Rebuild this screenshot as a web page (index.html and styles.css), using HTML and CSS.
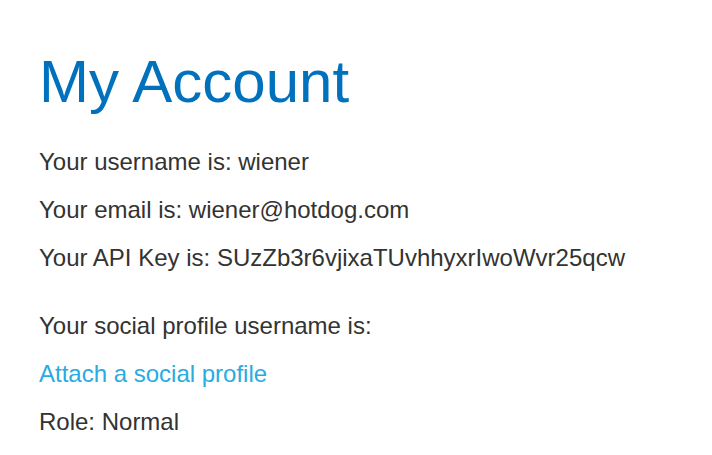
FILE: index.html
```html
<!DOCTYPE html>
<html>
<head>
<meta charset="utf-8">
<title>My Account</title>
<link rel="stylesheet" href="styles.css">
</head>
<body>
<div class="container">
  <h1 class="title">My Account</h1>
  <div class="account">
    <p class="line">Your username is: wiener</p>
    <p class="line">Your email is: wiener@hotdog.com</p>
    <p class="line">Your API Key is: SUzZb3r6vjixaTUvhhyxrIwoWvr25qcw</p>
    <p class="line spaced">Your social profile username is: </p>
    <p class="line"><a class="link" href="#">Attach a social profile</a></p>
    <p class="line">Role: Normal</p>
  </div>
</div>
</body>
</html>
```
FILE: styles.css
```css
html, body {
  margin: 0;
  padding: 0;
  background: #ffffff;
}
body {
  font-family: "Liberation Sans", Arial, sans-serif;
  color: #333332;
}
.container {
  padding: 47px 39px 0 39px;
}
.title {
  margin: 0;
  font-size: 60px;
  font-weight: normal;
  color: #0071bc;
  line-height: normal;
}
.account {
  padding-top: 32px;
}
.line {
  margin: 0 0 20px 0;
  font-size: 24px;
  line-height: 28px;
}
.spaced {
  margin-top: 40px;
}
.link {
  color: #29abe2;
  text-decoration: none;
}
```
